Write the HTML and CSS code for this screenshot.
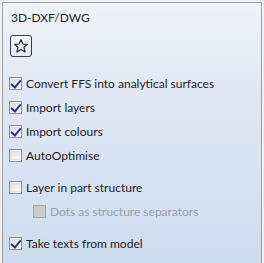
FILE: index.html
```html
<!DOCTYPE html>
<html lang="en">
<head>
    <meta charset="UTF-8">
    <title>3D-DXF/DWG</title>
    <link rel="stylesheet" href="styles.css">
</head>
<body>
    <div class="panel">
        <div class="panel-title">3D-DXF/DWG</div>
        <button class="fav-btn" title="Favourite">
            <svg width="16" height="16" viewBox="0 0 16 16">
                <polygon points="8,1.5 9.9,6 14.5,6.3 11,9.3 12.1,14 8,11.4 3.9,14 5,9.3 1.5,6.3 6.1,6" fill="none" stroke="#2b2b2b" stroke-width="1.2" stroke-linejoin="round"/>
            </svg>
        </button>

        <label class="option first">
            <span class="check checked"></span>Convert FFS into analytical surfaces
        </label>
        <label class="option">
            <span class="check checked"></span>Import layers
        </label>
        <label class="option">
            <span class="check checked"></span>Import colours
        </label>
        <label class="option">
            <span class="check"></span>AutoOptimise
        </label>

        <label class="option group">
            <span class="check"></span>Layer in part structure
        </label>
        <label class="option sub disabled">
            <span class="check"></span>Dots as structure separators
        </label>

        <label class="option group">
            <span class="check checked"></span>Take texts from model
        </label>
    </div>
</body>
</html>
```

FILE: styles.css
```css
* {
    margin: 0;
    padding: 0;
    box-sizing: border-box;
}

html, body {
    height: 100%;
}

body {
    background: #f0f0f0;
    font-family: Lato, "Open Sans", sans-serif;
    font-size: 12px;
    color: #1e1e1e;
    padding: 2px 2px 0 2px;
}

.panel {
    height: 100%;
    border: 1px solid #9aa0a8;
    border-bottom: none;
    background: linear-gradient(to bottom, #eef2f9 0%, #dfe8f4 35%, #cddcee 100%);
    padding: 6px 8px 0 6px;
}

.panel-title {
    height: 17px;
    line-height: 17px;
    padding-left: 2px;
}

.fav-btn {
    display: flex;
    align-items: center;
    justify-content: center;
    width: 22px;
    height: 22px;
    margin-top: 9px;
    margin-left: 1px;
    border: 1px solid #3c3c3c;
    border-radius: 3px;
    background: linear-gradient(to bottom, #f4f7fc, #e2eaf5);
}

.option {
    display: flex;
    align-items: center;
    height: 24px;
    white-space: nowrap;
}

.option.first {
    margin-top: 14px;
}

.option.group {
    margin-top: 8px;
}

.option.sub {
    padding-left: 24px;
}

.check {
    width: 13px;
    height: 13px;
    margin-right: 4px;
    border: 1px solid #8e8f8f;
    background: linear-gradient(135deg, #dcdcdc, #ffffff);
    position: relative;
    flex: none;
}

.check::before {
    content: "";
    position: absolute;
    inset: 1px;
    border: 1px solid #e4e4e4;
}

.check.checked::after {
    content: "";
    position: absolute;
    left: 3px;
    top: 0px;
    width: 4px;
    height: 8px;
    border-right: 2px solid #22398a;
    border-bottom: 2px solid #22398a;
    transform: rotate(40deg);
}

.disabled {
    color: #9a9fa6;
}

.disabled .check {
    background: #c9cbcc;
    border-color: #a4a6a8;
}

.disabled .check::before {
    border: none;
}
```
